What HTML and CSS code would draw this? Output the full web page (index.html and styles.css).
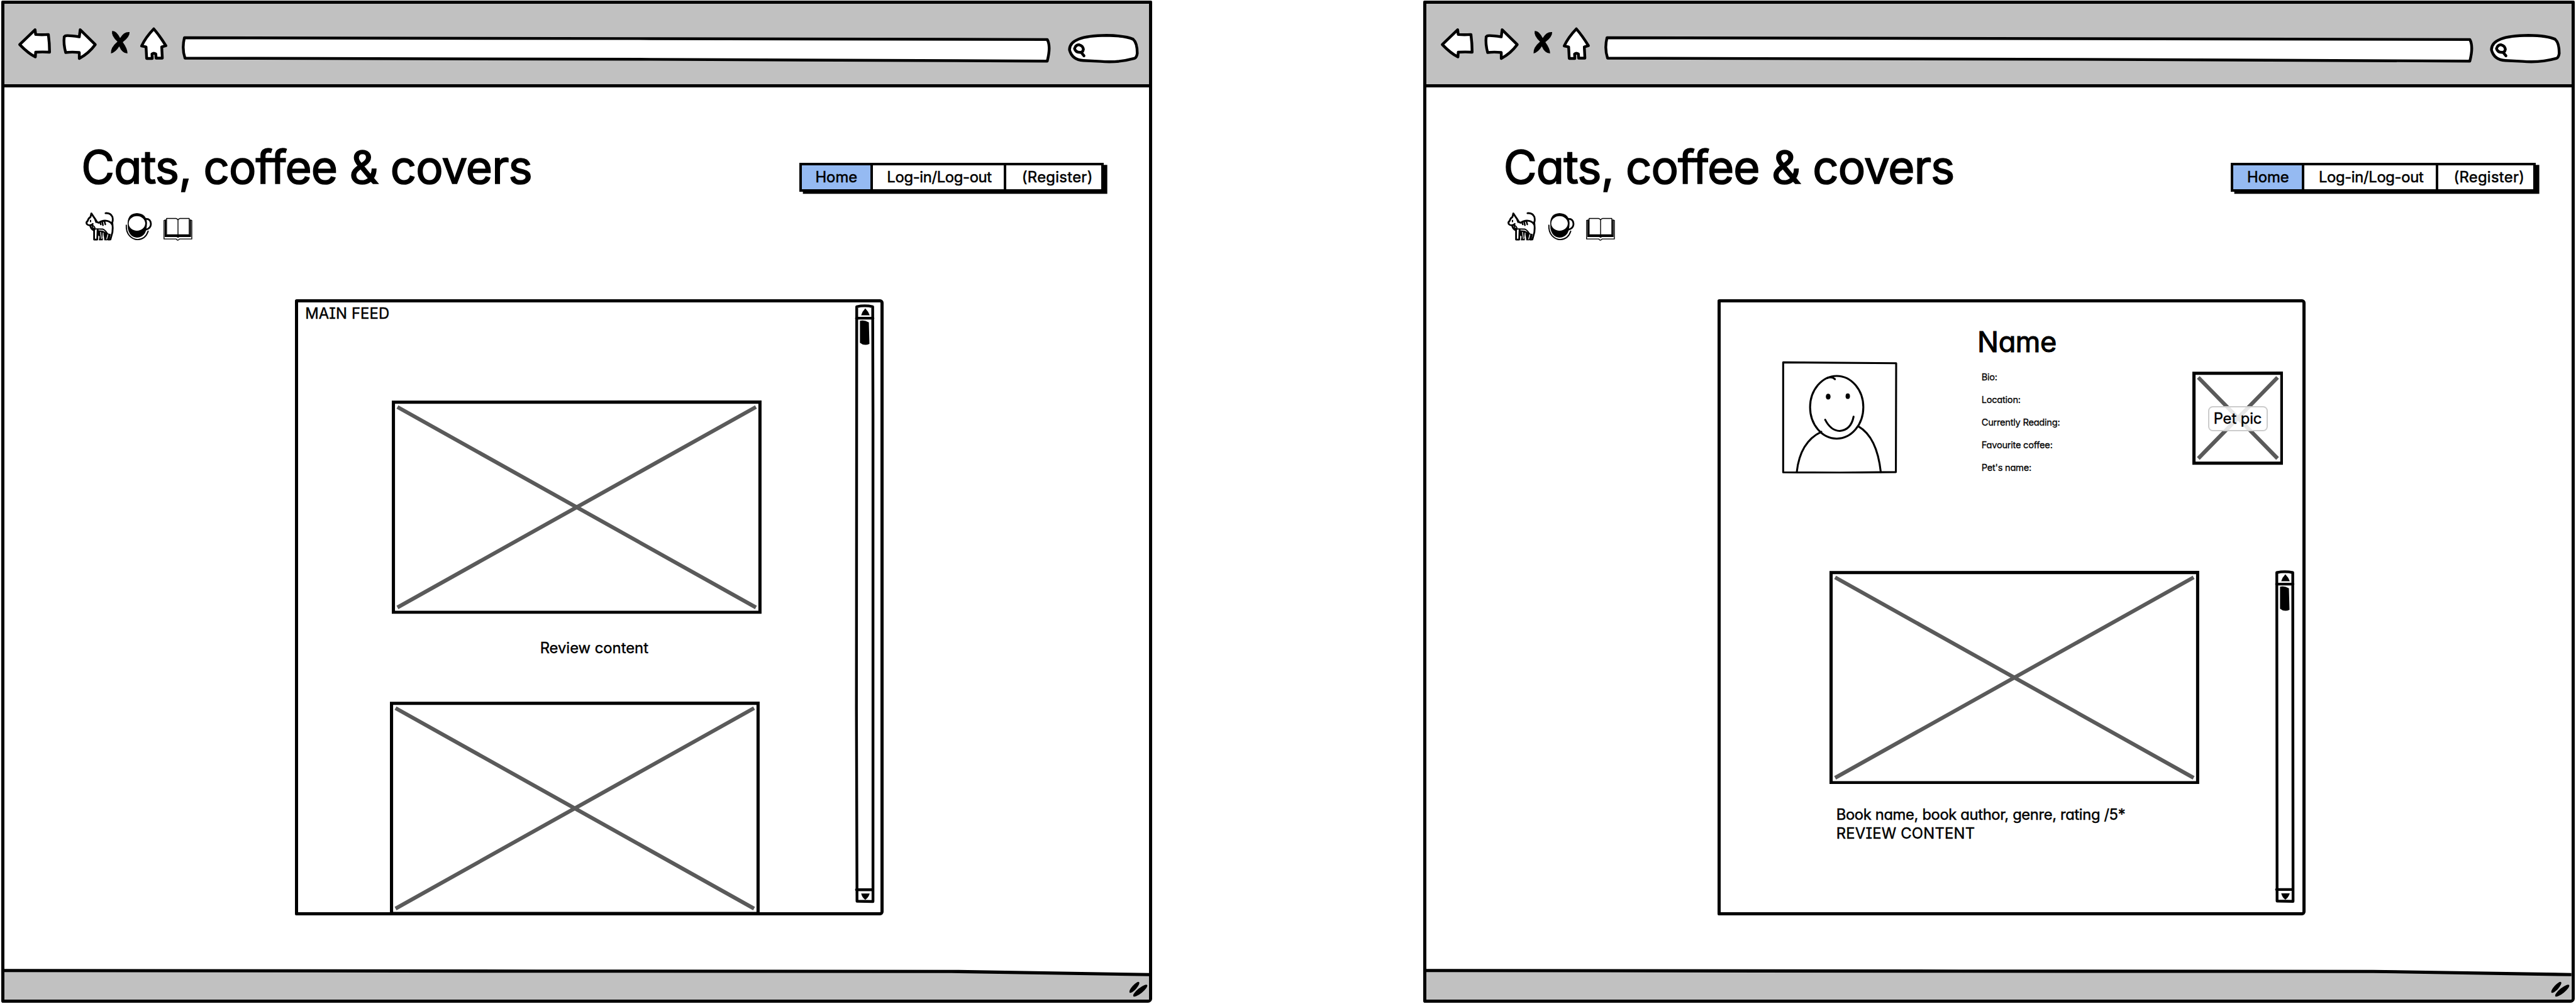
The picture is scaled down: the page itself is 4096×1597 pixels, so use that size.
FILE: index.html
```html
<!DOCTYPE html>
<html lang="en">
<head>
<meta charset="utf-8">
<title>Cats, coffee &amp; covers</title>
<link rel="stylesheet" href="styles.css">
</head>
<body>
<svg class="sprite" width="0" height="0" aria-hidden="true">
  <symbol id="back" viewBox="30 5 60 138"><path class="ink" d="M33.500 75 L59.500 50 L60.500 58 Q71 59 82 58 Q84 73 84 88 Q72 87 60.500 88 L60 96 Q48 90 33.500 75Z"/></symbol>
  <symbol id="forward" viewBox="102 5 64 138"><path class="ink" d="M110 60.500 Q113 59 134 62 L135.500 50 L161 75 Q150 90 134 98.500 L134 88.500 Q122 87 111 88.500 Q107 74 108.500 62Z"/></symbol>
  <symbol id="stop" viewBox="178 5 44 138"><path d="M190 52 Q197 51 203.500 64 Q210 53 219.500 54 Q220 62 208 71 Q216 82 216 90 Q207 90 202 78 Q196 88 188 90 Q187 80 199 70 Q188 60 190 52Z"/></symbol>
  <symbol id="home" viewBox="234 5 52 138"><path class="ink" d="M260 48.500 Q270 60 280.500 77 L273.500 79 Q274 88 274.500 98 L264 98 L263.500 91 Q260 88.500 257 91 L257.500 98.500 L248 98.500 L247 79 L239.500 77.500 Q246 63 260 48.500Z"/></symbol>
  <symbol id="address" viewBox="298 5 1482 138"><path class="ink" d="M312 63.500 L1100 65 L1770.500 66.500 Q1777 78 1770.500 103 L1100 100 L313 98 Q307.500 82 312 63.500Z"/></symbol>
  <symbol id="search" viewBox="1792 5 136 138"><path class="ink" d="M1831 102 Q1812 101 1807.500 84 Q1807 60 1870 59.500 Q1902 60 1915 66 Q1922 72 1922 90 Q1921 97 1917 98.500 Q1890 106 1860 103.500 Z"/><path class="ink" d="M1827 88 Q1818 89 1816 82 Q1818 75 1824 75.500 Q1830 77 1831 83 Q1830 88 1827 88 L1832 94"/></symbol>
  <symbol id="cat" viewBox="15 20 160 160">
    <path class="pen" d="M80 73 L54 34 L50 52 Q38 60 36 72 Q26 78 31 88 Q38 96 50 94 Q58 93 61 88"/>
    <path class="pen" d="M82 78 L92 82 Q110 68 134 72 Q154 76 160 92 M126 33 Q152 31 161 52 Q166 72 158 84 M161 86 Q164 108 161 130 L151 166 L141 167 L147 142"/>
    <path class="pen" d="M48 94 Q50 112 66 120 M68 112 L68 167 L84 167 L86 116"/>
    <path class="thin" d="M58 96 Q60 112 72 116 Q76 104 60 94 M78 113 L112 114 Q126 120 136 138"/>
    <path d="M84 120 L112 122 L136 134 L148 140 L146 166 L134 171 L120 171 L116 138 L112 171 L92 171 L96 152 L84 142Z"/>
    <path class="thin white" d="M101 130 L105 162 M114 134 L112 160 M138 142 L132 164"/>
    <path d="M74 56 L84 76 L76 84 L70 68Z"/>
    <ellipse cx="50" cy="73" rx="3.500" ry="7"/>
    <path class="stripe" d="M98 78 L102 90 M109 76 L113 94 M121 76 L125 90"/>
  </symbol>
  <symbol id="coffee" viewBox="225 20 145 160">
    <path class="thin" d="M234 94 Q232 126 250 147 Q268 167 292 167 Q332 165 345 124"/>
    <path d="M241 82 Q242 36 288 33 Q336 36 339 82 Q338 118 328 136 Q314 157 288 157 Q250 154 242 110Z"/>
    <ellipse class="fillwhite" cx="288" cy="85" rx="42" ry="37"/>
    <path class="pen" d="M334 62 Q358 62 359 88 Q358 112 332 117"/>
  </symbol>
  <symbol id="book" viewBox="412 20 165 160">
    <path class="fine" d="M434 67 L424 70 L424 164 L486 164 Q494 176 503 164 L565 164 L565 70 L556 67"/>
    <path d="M428 70 L435 66 V144 H554 V66 L561 70 V154 H502 L495 158 L488 154 H428Z"/>
    <path class="fine fillwhite" d="M437 60 L485 60 Q492 61 495 68 Q498 61 505 60 L552 60 V143 H437Z M495 68 V150"/>
  </symbol>
  <symbol id="grip" viewBox="0 1637 1935 54" preserveAspectRatio="none">
    <path fill="#c1c1c1" d="M0 1641 L1500 1643 L1935 1648 V1694 H0Z"/>
    <path class="ink line" d="M-5 1641 L900 1642 L1600 1642.500 L1940 1648"/>
    <ellipse cx="1909.500" cy="1669.500" rx="12" ry="3.800" transform="rotate(-48 1909.500 1669.500)"/>
    <ellipse cx="1919.500" cy="1675" rx="15" ry="4.300" transform="rotate(-39 1919.500 1675)"/>
  </symbol>
  <symbol id="photo" viewBox="0 0 625 361">
    <path class="cross" d="M9.500 11 L615.500 350 M615.500 11 L9.500 350"/>
    <path class="ink line" d="M2.700 3 L622.300 2.700 L622.300 358.300 L2.700 358.300Z"/>
  </symbol>
</svg>

<main class="board">
  <section class="window">
    <div class="toolbar">
      <svg class="tool back"><use href="#back"/></svg>
      <svg class="tool forward"><use href="#forward"/></svg>
      <svg class="tool stop"><use href="#stop"/></svg>
      <svg class="tool home"><use href="#home"/></svg>
      <svg class="tool address"><use href="#address"/></svg>
      <svg class="tool search"><use href="#search"/></svg>
    </div>
    <div class="page">
      <header class="masthead">
        <h1 class="title">Cats, coffee &amp; covers</h1>
        <nav class="menu">
          <a class="item active">Home</a>
          <a class="item login">Log-in/Log-out</a>
          <a class="item register">(Register)</a>
        </nav>
      </header>
      <div class="emblems">
        <svg class="emblem cat"><use href="#cat"/></svg>
        <svg class="emblem coffee"><use href="#coffee"/></svg>
        <svg class="emblem book"><use href="#book"/></svg>
      </div>
      <div class="panel feed">
        <div class="posts">
          <h2 class="label feed-title">MAIN FEED</h2>
          <svg class="photo first"><use href="#photo"/></svg>
          <p class="label caption">Review content</p>
          <svg class="photo second"><use href="#photo"/></svg>
        </div>
        <svg class="scroll tall" viewBox="1444 514 36 1015">
          <path class="ink" d="M1448.500 519 Q1462 516 1475.500 519 L1476 700 L1476 1525 L1449 1524.500 L1448 1200Z M1448 538.500 H1476 M1448 1505 H1476"/>
          <path d="M1463 522 Q1468 527 1470.500 533.500 H1456 Q1458 527 1463 522Z M1456 1511.500 H1470.500 Q1468 1519 1463 1522 Q1458 1519 1456 1511.500Z M1454 543 Q1461 541 1469 545.500 L1470 582 Q1461 586 1454 580Z"/>
        </svg>
      </div>
    </div>
    <svg class="footer"><use href="#grip"/></svg>
  </section>

  <section class="window">
    <div class="toolbar">
      <svg class="tool back"><use href="#back"/></svg>
      <svg class="tool forward"><use href="#forward"/></svg>
      <svg class="tool stop"><use href="#stop"/></svg>
      <svg class="tool home"><use href="#home"/></svg>
      <svg class="tool address"><use href="#address"/></svg>
      <svg class="tool search"><use href="#search"/></svg>
    </div>
    <div class="page">
      <header class="masthead member">
        <h1 class="title">Cats, coffee &amp; covers</h1>
        <nav class="menu">
          <a class="item active">Home</a>
          <a class="item login">Log-in/Log-out</a>
          <a class="item register">(Register)</a>
        </nav>
      </header>
      <div class="emblems">
        <svg class="emblem cat"><use href="#cat"/></svg>
        <svg class="emblem coffee"><use href="#coffee"/></svg>
        <svg class="emblem book"><use href="#book"/></svg>
      </div>
      <div class="panel profile">
        <div class="about">
          <svg class="avatar" viewBox="3011 611 196 191">
            <path class="mid" d="M3013.500 613.500 L3204.500 615 L3204 799 L3110 800 L3013.500 799.500Z"/>
            <path class="mid" d="M3036.500 799 Q3042 748 3078 731 M3141 722 Q3172 740 3178.500 799"/>
            <ellipse class="mid" cx="3104" cy="689.500" rx="45" ry="53"/>
            <path class="mid" d="M3088 640 Q3096 637 3101 642"/>
            <ellipse cx="3089.600" cy="671.500" rx="4" ry="5"/><ellipse cx="3122.700" cy="670.700" rx="3.700" ry="4.700"/>
            <path class="mid" d="M3084.500 710.500 Q3094 729 3109 729.500 Q3128 728 3132.500 705.500"/>
          </svg>
          <div class="bio">
            <h2 class="name">Name</h2>
            <p class="fact">Bio:</p>
            <p class="fact">Location:</p>
            <p class="fact">Currently Reading:</p>
            <p class="fact">Favourite coffee:</p>
            <p class="fact">Pet's name:</p>
          </div>
          <div class="pet">
            <svg class="pet-photo" viewBox="0 0 154 158"><path class="cross" d="M10 10 L144 147 M144 10 L10 147"/><path class="ink line" d="M2.700 3 L151.300 2.700 V155 H2.700Z"/></svg>
            <span class="label pet-label">Pet pic</span>
          </div>
        </div>
        <div class="reviews">
          <div class="review">
            <svg class="photo"><use href="#photo"/></svg>
            <p class="label details">Book name, book author, genre, rating /5*</p>
            <p class="label content">REVIEW CONTENT</p>
          </div>
          <svg class="scroll short" viewBox="3844 964 36 565">
            <path class="ink" d="M3848.500 969 Q3862 966 3875.500 969 L3876 1525 L3849 1524.500Z M3848 988.500 H3876 M3848 1505 H3876"/>
            <path d="M3863 972 Q3868 977 3870.500 983.500 H3856 Q3858 977 3863 972Z M3856 1511.500 H3870.500 Q3868 1519 3863 1522 Q3858 1519 3856 1511.500Z M3854 993 Q3861 991 3869 995.500 L3870 1032 Q3861 1036 3854 1030Z"/>
          </svg>
        </div>
      </div>
    </div>
    <svg class="footer"><use href="#grip"/></svg>
  </section>
</main>
</body>
</html>
```
FILE: styles.css
```css
* { box-sizing: border-box; }

body {
  margin: 0;
  overflow: hidden;
  background: #fff;
  color: #000;
  font-family: Inter, "Open Sans", sans-serif;
  font-feature-settings: "cv11", "cv08";
}

h1, h2, p { margin: 0; font-weight: 400; white-space: nowrap; }
svg { display: block; flex: none; }
.sprite { position: absolute; }

.board {
  zoom: 0.94074;
  display: flex;
  gap: 458px;
  width: 4354px;
  height: 1697px;
  padding: 1px 1.6px;
}

.window {
  display: flex;
  flex-direction: column;
  flex: none;
  width: 1946px;
  height: 1695px;
  border: 5.4px solid #000;
  border-radius: 2px 2px 7px 3px;
}

/* strokes */
.ink, .pen, .thin, .fine, .mid, .cross, .stripe {
  fill: none;
  stroke: #000;
  stroke-width: 4.7px;
  stroke-linejoin: round;
  stroke-linecap: round;
}
#back .ink, #forward .ink, #home .ink, #address .ink, #search .ink { fill: #fff; }
#search .ink + .ink { fill: none; }
.line { stroke-linejoin: miter; stroke-linecap: butt; stroke-width: 5.4px; }
.pen { stroke-width: 9px; }
.thin { stroke-width: 6px; }
.fine { stroke-width: 4.5px; }
.stripe { stroke-width: 8px; }
.mid { stroke-width: 3.3px; }
.white { stroke: #fff; stroke-width: 4px; }
.fillwhite { fill: #fff; }
.cross { stroke: #5a5a5a; stroke-width: 6.6px; stroke-linecap: butt; }

/* toolbar */
.toolbar {
  display: flex;
  flex: none;
  gap: 12px;
  height: 141.3px;
  padding-left: 23px;
  background: #c1c1c1;
  border-bottom: 5.4px solid #000;
}
.tool { height: 138px; margin-top: -1px; }
.back { width: 60px; }
.forward { width: 64px; }
.stop { width: 44px; }
.home { width: 52px; }
.address { width: 1482px; }
.search { width: 136px; }

/* page */
.page { flex: none; height: 1489px; padding-top: 84.5px; }

.masthead {
  display: flex;
  justify-content: space-between;
  height: 100px;
  padding: 0 76.500px 0 130.500px;
}
.masthead.member { padding-right: 60.500px; }
.title {
  font-size: 77px;
  line-height: 101px;
  letter-spacing: -0.95px;
  -webkit-text-stroke: 1.8px #000;
}

.menu {
  display: flex;
  width: 515px;
  height: 49px;
  margin-top: 43px;
  border: 4.400px solid #000;
  box-shadow: 6px 3.500px 0 #000;
}
.item {
  flex: none;
  width: 116px;
  font-size: 25.300px;
  line-height: 40.500px;
  text-align: center;
  -webkit-text-stroke: 0.600px #000;
}
.active { background: #95baf2; padding-left: 1px; }
.login { width: 226px; border-left: 4.400px solid #000; padding-left: 3px; letter-spacing: -0.350px; }
.register { width: 165px; border-left: 4.400px solid #000; padding-left: 11px; letter-spacing: 0.350px; }

.emblems {
  display: flex;
  gap: 16.700px;
  margin: 24.500px 0 0 134px;
}
.emblem { height: 53.300px; }
.cat { width: 53.300px; }
.emblem.coffee { width: 48.300px; margin-right: -2.700px; }
.emblem.book { width: 55px; }

/* panels */
.panel {
  width: 994.500px;
  height: 1042px;
  margin: 96px 0 0 492px;
  border: 5.400px solid #000;
  border-radius: 3px 6px 6px 2px;
}
.label { font-size: 25.300px; line-height: 32px; -webkit-text-stroke: 0.500px #000; }

.feed { display: flex; justify-content: space-between; padding: 2px 8.500px 0 0; }
.feed-title { margin: 1.500px 0 0 11.500px; letter-spacing: 0.150px; }
.photo { width: 625px; height: 361px; }
.first { margin: 130.500px 0 0 158.500px; }
.caption { margin: 42px 0 0 408.500px; }
.second { margin: 74.500px 0 0 154.500px; }
.scroll { width: 36px; }
.tall { height: 1015px; }
.short { height: 565px; margin-right: 12px; }

.about { display: flex; height: 452px; }
.avatar { width: 196px; height: 191px; margin: 98.500px 0 0 103px; }
.bio { flex: none; width: 360px; margin: 37px 0 0 135px; }
.name {
  font-size: 48px;
  line-height: 60px;
  letter-spacing: -0.500px;
  -webkit-text-stroke: 1.200px #000;
}
.fact {
  margin-left: 7px;
  font-size: 15.600px;
  line-height: 38.350px;
  letter-spacing: -0.280px;
  -webkit-text-stroke: 0.300px #000;
}
.name + .fact { margin-top: 10.500px; }

.pet { display: grid; place-items: center; width: 154px; height: 158px; margin: 117.500px 0 0 3px; }
.pet > * { grid-area: 1 / 1; }
.pet-photo { width: 154px; height: 158px; }
.pet-label {
  width: 101px;
  height: 43px;
  border: 2.200px solid #ccc;
  border-radius: 8px;
  background: rgba(255, 255, 255, 0.85);
  line-height: 38px;
  text-align: center;
  letter-spacing: -0.100px;
}

.reviews { display: flex; justify-content: space-between; }
.review { margin: 1.500px 0 0 184.500px; }
.details { margin: 36px 0 0 11px; letter-spacing: -0.400px; }
.content { margin-left: 11px; line-height: 31px; letter-spacing: 0.230px; }

.footer { width: 100%; height: 54px; }
```
